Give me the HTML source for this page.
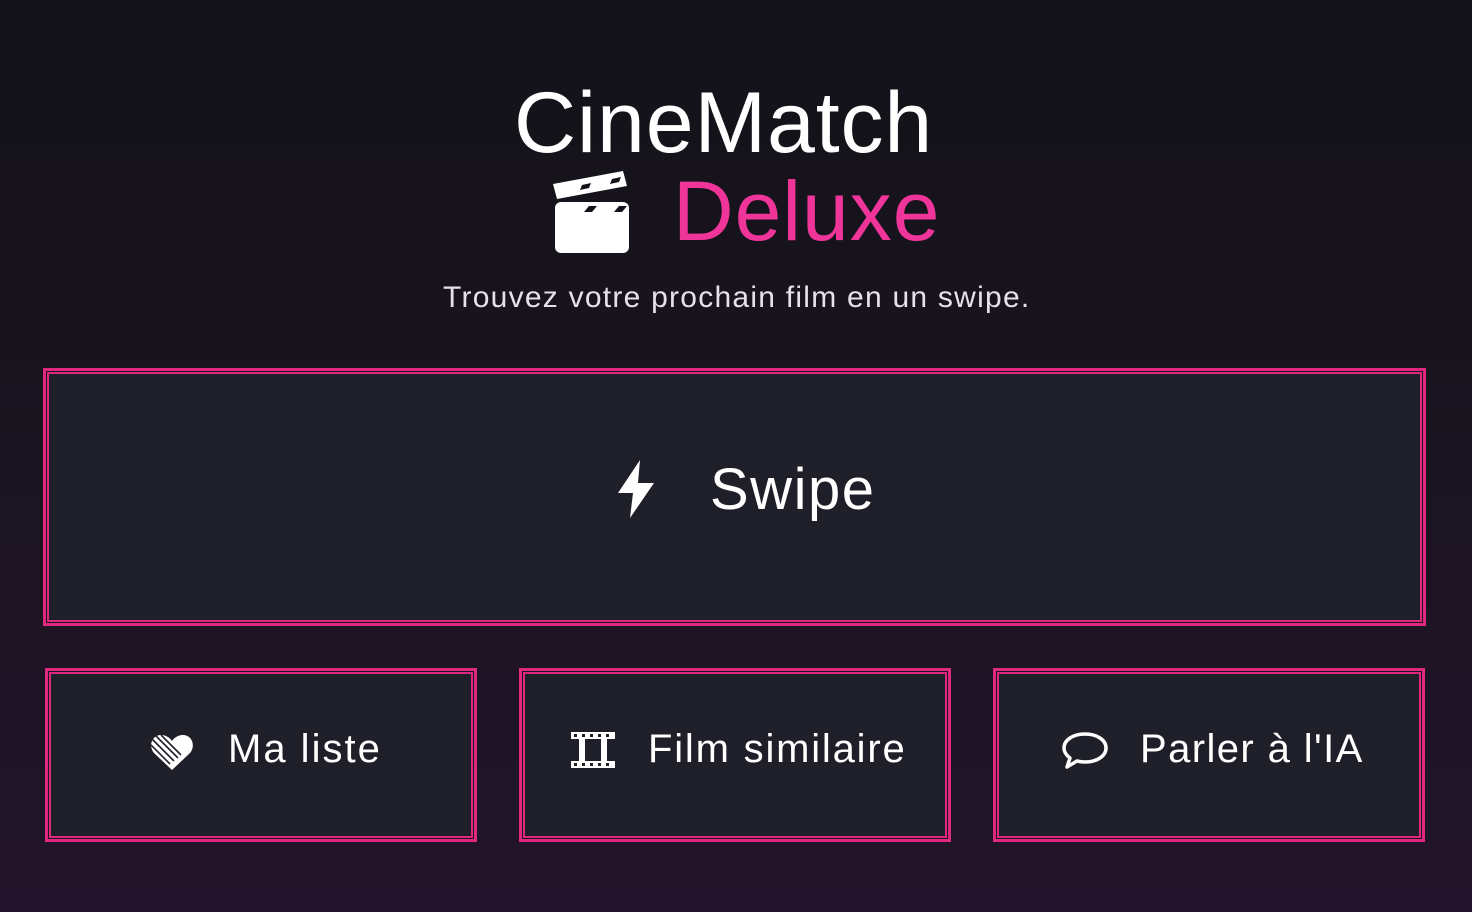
<!DOCTYPE html>
<html><head><meta charset="utf-8"><style>
html,body{margin:0;padding:0}
body{width:1472px;height:912px;background:linear-gradient(180deg,#131218 0%,#1a1420 50%,#22142a 100%);font-family:"Liberation Sans",sans-serif;color:#fff;position:relative;overflow:hidden}
.t{position:absolute;white-space:nowrap}
.box{position:absolute;box-sizing:border-box;background:#1f1f2a;border:3px solid #e0287f;box-shadow:inset 0 0 0 1px #1a1520, inset 0 0 0 3px #e0287f}
</style></head><body>
<div class="t" style="left:514px;top:78px;font-size:86px;line-height:90px;letter-spacing:0.9px">CineMatch</div>
<svg class="t" style="left:552px;top:170px" width="78" height="84" viewBox="0 0 78 84">
<g fill="#fff">
<polygon points="1,14 71,1 75,16 5,29"/>
<rect x="3" y="32" width="74" height="51" rx="6"/>
</g>
<g fill="#141218">
<polygon points="30,15 39,13 37,18 28,20"/><polygon points="60,9 69,7 67,12 58,14"/>
<polygon points="37,36 45,36 40,42 32,42"/><polygon points="67,36 75,36 70,42 62,42"/>
</g>
</svg>
<div class="t" style="left:673px;top:166px;font-size:84px;line-height:90px;color:#f0359a;letter-spacing:1px">Deluxe</div>
<div class="t" style="left:443px;top:280px;font-size:30px;line-height:36px;color:#e6e2e8;letter-spacing:1.25px">Trouvez votre prochain film en un swipe.</div>

<div class="box" style="left:43px;top:368px;width:1383px;height:258px"></div>
<svg class="t" style="left:616px;top:460px" width="40" height="58" viewBox="0 0 40 58"><polygon fill="#fff" points="24,0 2,33 17,33 14,58 38,23 22,23"/></svg>
<div class="t" style="left:710px;top:456px;font-size:58px;line-height:68px;letter-spacing:1.5px">Swipe</div>

<div class="box" style="left:45px;top:668px;width:432px;height:174px"></div>
<div class="box" style="left:519px;top:668px;width:432px;height:174px"></div>
<div class="box" style="left:993px;top:668px;width:432px;height:174px"></div>

<svg class="t" style="left:150px;top:732px" width="44" height="40" viewBox="0 0 44 40"><defs><clipPath id="h"><path d="M22 38 L4 21 C-2 14 2 3 11 3 C16 3 20 6 22 9 C24 6 28 3 33 3 C42 3 46 14 40 21 Z"/></clipPath></defs><path d="M22 38 L4 21 C-2 14 2 3 11 3 C16 3 20 6 22 9 C24 6 28 3 33 3 C42 3 46 14 40 21 Z" fill="#fff"/><g clip-path="url(#h)" stroke="#1f1f2a" stroke-width="1.6"><line x1="0" y1="12" x2="20" y2="32"/><line x1="2" y1="7" x2="24" y2="29"/><line x1="6" y1="4" x2="28" y2="26"/><line x1="11" y1="3" x2="31" y2="23"/></g></svg>
<div class="t" style="left:228px;top:725px;font-size:40px;line-height:48px;letter-spacing:2px">Ma liste</div>

<svg class="t" style="left:571px;top:732px" width="44" height="36" viewBox="0 0 44 36"><g fill="#fff"><rect x="0" y="0" width="44" height="7"/><rect x="0" y="29" width="44" height="7"/><rect x="8" y="7" width="6" height="22"/><rect x="30" y="7" width="6" height="22"/></g><g fill="#1f1f2a"><rect x="3" y="2" width="3" height="3"/><rect x="11" y="2" width="3" height="3"/><rect x="19" y="2" width="3" height="3"/><rect x="27" y="2" width="3" height="3"/><rect x="35" y="2" width="3" height="3"/><rect x="3" y="31" width="3" height="3"/><rect x="11" y="31" width="3" height="3"/><rect x="19" y="31" width="3" height="3"/><rect x="27" y="31" width="3" height="3"/><rect x="35" y="31" width="3" height="3"/></g></svg>
<div class="t" style="left:648px;top:725px;font-size:40px;line-height:48px;letter-spacing:1.8px">Film similaire</div>

<svg class="t" style="left:1061px;top:730px" width="48" height="40" viewBox="0 0 48 40"><path d="M24 4 C36 4 45 10 45 18 C45 26 36 32 24 32 C21 32 18 31.5 16 31 L6 37 L9 28 C5 25 3 22 3 18 C3 10 12 4 24 4 Z" fill="none" stroke="#fff" stroke-width="3.5" stroke-linejoin="round"/></svg>
<div class="t" style="left:1140px;top:725px;font-size:40px;line-height:48px;letter-spacing:1.4px">Parler à l'IA</div>
</body></html>
